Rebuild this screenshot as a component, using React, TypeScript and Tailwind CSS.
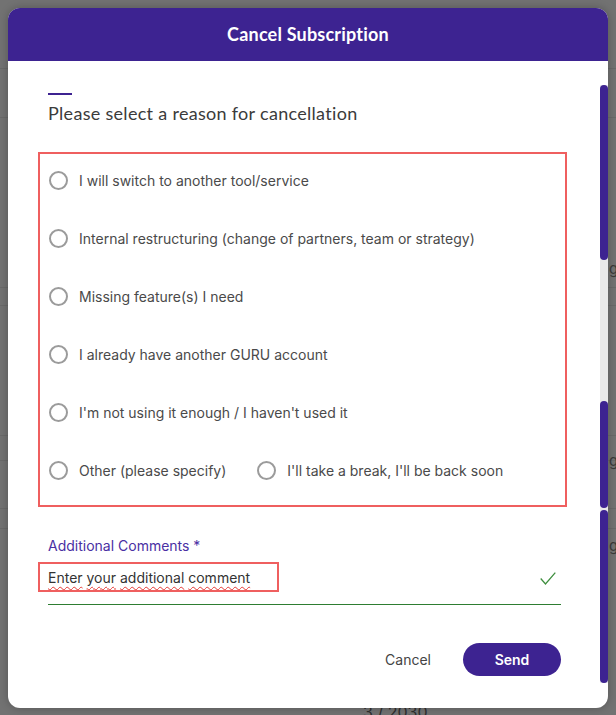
import React from "react";

const reasons = [
  "I will switch to another tool/service",
  "Internal restructuring (change of partners, team or strategy)",
  "Missing feature(s) I need",
  "I already have another GURU account",
  "I'm not using it enough / I haven't used it",
];

function Radio({ label }: { label: string }) {
  return (
    <label className="flex items-center gap-[11px] cursor-pointer">
      <span className="w-[19px] h-[19px] rounded-full border-2 border-[#9b9b9b] bg-white shrink-0" />
      <span className="text-[14px] text-[#4a4a4a]">{label}</span>
    </label>
  );
}

export default function App() {
  const bgLines = [68, 117, 287, 305, 435, 460, 508, 528];
  return (
    <div className="relative w-[616px] h-[715px] bg-[#727272] overflow-hidden pt-[8px] pl-[8px]" style={{ fontFamily: "Inter, 'Noto Sans', sans-serif" }}>
      {bgLines.map((y) => (
        <div key={y} className="absolute left-0 right-0 h-px bg-[#696969]" style={{ top: y }} />
      ))}
      <div className="absolute left-[609px] top-[258px] text-[15px] text-[#3a3a3a]">ge</div>
      <div className="absolute left-[609px] top-[450px] text-[15px] text-[#3a3a3a]">ge</div>
      <div className="absolute left-[609px] top-[535px] text-[15px] text-[#3a3a3a]">ge</div>
      <div className="absolute left-[363px] top-[700px] text-[16px] text-[#2e2e2e]">3 / 2030</div>

      <div className="relative w-[600px] h-[700px] bg-white rounded-[12px] overflow-hidden flex flex-col shadow-[0_0_8px_rgba(0,0,0,0.25)]">
        <div className="h-[53px] bg-[#3d2391] flex items-center justify-center shrink-0">
          <h1 className="text-white text-[18px] font-bold tracking-[0.2px]" style={{ fontFamily: "Lato, sans-serif" }}>
            Cancel Subscription
          </h1>
        </div>

        <div className="flex flex-col">
          <div className="ml-[40px] mt-[32px] w-[24px] h-[2px] bg-[#3d2391]" />
          <h2 className="ml-[40px] mt-[6px] text-[18px] leading-[24px] tracking-[0.3px] text-[#3b3b3b]" style={{ fontFamily: "Lato, sans-serif" }}>
            Please select a reason for cancellation
          </h2>

          <div className="ml-[30px] mt-[27px] w-[529px] h-[355px] border-2 border-[#ef5f5f] flex flex-col gap-[6px] pl-[9px] pb-[9px]">
            {reasons.map((r) => (
              <div key={r} className="h-[52px] flex items-center">
                <Radio label={r} />
              </div>
            ))}
            <div className="h-[52px] flex items-center gap-[31px]">
              <Radio label="Other (please specify)" />
              <Radio label="I'll take a break, I'll be back soon" />
            </div>
          </div>

          <div className="ml-[40px] mt-[29px] text-[14px] leading-[20px] text-[#4a2fa3]">
            Additional Comments *
          </div>

          <div className="relative ml-[40px] w-[513px] mt-[6px]">
            <div className="-ml-[10px] w-[241px] h-[30px] border-2 border-[#ef5f5f] pl-[8px] flex items-center text-[14px] text-[#333]">
              <span>
                {["Enter", "your", "additional", "comment"].map((w, i) => (
                  <React.Fragment key={w}>
                    {i > 0 && " "}
                    <span className="underline decoration-wavy decoration-[#e53935] decoration-1 underline-offset-[3px]">{w}</span>
                  </React.Fragment>
                ))}
              </span>
            </div>
            <svg className="absolute right-[5px] top-[10px]" width="16" height="13" viewBox="0 0 16 13" fill="none">
              <path d="M0.7 6.5 L5.5 12 L15.3 0.6" stroke="#3f8f3f" strokeWidth="1.3" />
            </svg>
            <div className="mt-[12px] h-px bg-[#2e7d32]" />
          </div>

          <div className="mt-[38px] mr-[47px] flex items-center justify-end">
            <button className="text-[14px] text-[#444] mr-[32px]">Cancel</button>
            <button className="w-[98px] h-[33px] rounded-full bg-[#3d2391] text-white text-[14px] font-semibold">
              Send
            </button>
          </div>
        </div>

        <div className="absolute right-0 top-[77px] w-[8px] h-[598px] bg-[#e9e9e9]" />
        <div className="absolute right-0 top-[77px] w-[8px] h-[175px] rounded-full bg-[#3d2391]" />
        <div className="absolute right-0 top-[393px] w-[8px] h-[107px] rounded-full bg-[#3d2391]" />
        <div className="absolute right-0 top-[502px] w-[8px] h-[173px] rounded-full bg-[#3d2391]" />
      </div>
    </div>
  );
}
